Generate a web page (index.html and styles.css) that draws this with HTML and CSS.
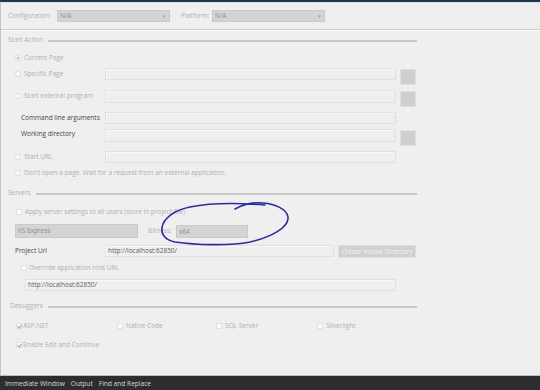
FILE: index.html
```html
<!DOCTYPE html>
<html>
<head>
<meta charset="utf-8">
<link rel="stylesheet" href="styles.css">
</head>
<body>
<div class="app">
  <div class="topstrip"></div>
  <div class="panel">
    <div class="toprow">
      <span class="lbl cfg-lbl">Configuration:</span>
      <div class="combo cfg">N/A<span class="arrow">▾</span></div>
      <span class="lbl plat-lbl">Platform:</span>
      <div class="combo cfg">N/A<span class="arrow">▾</span></div>
    </div>
    <div class="sep"></div>

    <div class="form">
      <div class="head h-start">Start Action<span class="rule"></span></div>

      <div class="row r-current">
        <span class="opt"><span class="radio on"></span>Current Page</span>
      </div>
      <div class="row r-specific">
        <span class="opt col1"><span class="radio"></span>Specific Page</span>
        <div class="field f-main"></div>
        <div class="btn"></div>
      </div>
      <div class="row r-external">
        <span class="opt col1"><span class="radio"></span>Start external program</span>
        <div class="field f-main tall"></div>
        <div class="btn"></div>
      </div>
      <div class="row r-args">
        <span class="dark col1 indent">Command line arguments</span>
        <div class="field f-main"></div>
      </div>
      <div class="row r-workdir">
        <span class="dark col1 indent">Working directory</span>
        <div class="field f-main tall off1"></div>
        <div class="btn off2"></div>
      </div>
      <div class="row r-url">
        <span class="opt col1"><span class="radio"></span>Start URL</span>
        <div class="field f-main"></div>
      </div>
      <div class="row r-dont">
        <span class="opt"><span class="radio"></span>Don't open a page. Wait for a request from an external application.</span>
      </div>

      <div class="head h-servers">Servers<span class="rule"></span></div>
      <div class="row r-apply">
        <span class="opt chk-row"><span class="check"></span>Apply server settings to all users (store in project file)</span>
      </div>
      <div class="row r-iis">
        <div class="combo iis">IIS Express</div>
        <span class="lbl bit-lbl">Bitness:</span>
        <div class="combo bit">x64</div>
      </div>
      <div class="row r-purl">
        <span class="dark purl-lbl">Project Url</span>
        <div class="field f-purl">http://localhost:62850/</div>
        <div class="btn vdir">Create Virtual Directory</div>
      </div>
      <div class="row r-override">
        <span class="opt ov-row"><span class="check"></span>Override application root URL</span>
      </div>
      <div class="row r-root">
        <div class="field f-root">http://localhost:62850/</div>
      </div>

      <div class="head h-debug">Debuggers<span class="rule"></span></div>
      <div class="row r-dbg">
        <span class="opt dcol c1"><span class="check on"></span>ASP.NET</span>
        <span class="opt dcol c2"><span class="check"></span>Native Code</span>
        <span class="opt dcol c3"><span class="check"></span>SQL Server</span>
        <span class="opt dcol c4"><span class="check"></span>Silverlight</span>
      </div>
      <div class="row r-enc">
        <span class="opt dcol c1"><span class="check on"></span>Enable Edit and Continue</span>
      </div>
    </div>
  </div>
  <div class="statusbar">
    <span class="tab t1">Immediate Window</span>
    <span class="tab">Output</span>
    <span class="tab">Find and Replace</span>
  </div>
</div>
<svg class="annot" width="540" height="390" viewBox="0 0 540 390">
  <path d="M235,209 C242,205 252,202 263,203 C275,204 287,209 288,217 C289,227 272,237 250,242 C230,246 195,245 175,242 C165,240 161,234 162,228 C163,218 175,210 190,207 C210,203 240,203 265,205" fill="none" stroke="#2c2c9e" stroke-width="1.6" stroke-linecap="round"/>
</svg>
</body>
</html>
```

FILE: styles.css
```css
* { box-sizing: border-box; }
html, body {
  margin: 0;
  padding: 0;
  width: 540px;
  height: 390px;
  overflow: hidden;
  background: #efefef;
  font-family: "Open Sans", "Noto Sans", sans-serif;
  font-size: 6.5px;
  color: #b0b0b0;
}
.app {
  position: relative;
  width: 540px;
  height: 390px;
  display: flex;
  flex-direction: column;
}
.topstrip {
  height: 3px;
  background: #22384a;
  border-bottom: 1px solid #cfe8f0;
}
.panel {
  flex: 1;
  border-left: 1px solid #c4c4c4;
}
.toprow {
  display: flex;
  align-items: center;
  height: 12px;
  margin-top: 7px;
  padding-left: 7px;
}
.lbl { line-height: 12px; white-space: nowrap; }
.cfg-lbl { width: 49px; }
.plat-lbl { width: 31px; margin-left: 11px; }
.combo {
  position: relative;
  height: 12px;
  line-height: 10px;
  background: #d4d4d4;
  border: 1px solid #cacaca;
  color: #8e8e8e;
  padding-left: 2px;
  white-space: nowrap;
}
.combo.cfg { width: 113px; }
.arrow {
  position: absolute;
  right: 3px;
  top: 0;
  font-size: 5px;
  color: #a0a0a0;
}
.sep {
  height: 2px;
  margin-top: 7px;
  border-top: 1px solid #cdcdcd;
  border-bottom: 1px solid #fbfbfb;
}
.form {
  width: 416px;
  padding-left: 7px;
}
.head {
  display: flex;
  align-items: center;
  height: 12px;
  line-height: 12px;
  white-space: nowrap;
}
.rule {
  flex: 1;
  height: 2px;
  background: #c8c8c8;
  margin-left: 5px;
  margin-top: 1px;
}
.h-start { margin-top: 3px; }
.h-servers { margin-top: 8px; }
.h-debug { margin-top: 9px; padding-left: 2px; }

.row {
  display: flex;
  align-items: flex-start;
  line-height: 12px;
  white-space: nowrap;
}
.opt {
  display: flex;
  align-items: center;
  height: 12px;
  padding-left: 7px;
}
.col1 { width: 97px; flex: none; }
.indent { padding-left: 13px; }
.dark { color: #444444; line-height: 12px; }
.radio {
  width: 6px;
  height: 6px;
  border-radius: 50%;
  background: #fdfdfd;
  border: 1px solid #dcdcdc;
  margin-right: 3px;
  position: relative;
}
.radio.on::after {
  content: "";
  position: absolute;
  left: 1px;
  top: 1px;
  width: 2px;
  height: 2px;
  border-radius: 50%;
  background: #a8a8a8;
}
.check {
  width: 6px;
  height: 6px;
  background: #fdfdfd;
  border: 1px solid #e0e0e0;
  margin-right: 3px;
  position: relative;
}
.check.on::after {
  content: "";
  position: absolute;
  left: 1px;
  top: 0px;
  width: 2px;
  height: 3px;
  border-right: 1px solid #a0a0a0;
  border-bottom: 1px solid #a0a0a0;
  transform: rotate(40deg);
}
.field {
  height: 12px;
  background: #efefef;
  border: 1px solid #e0e0e0;
  box-shadow: inset 1px 1px 0 #f8f8f8;
  color: #5e5e5e;
  line-height: 10px;
  padding-left: 2px;
}
.f-main { width: 291px; }
.field.tall { height: 13px; }
.off1 { margin-top: 1px; }
.btn {
  width: 16px;
  height: 16px;
  margin-left: 4px;
  margin-top: 1px;
  background: #cfcfcf;
  border: 1px solid #e0e0e0;
}
.btn.off2 { margin-top: 2px; }

.r-current { margin-top: 6px; height: 12px; }
.r-specific { margin-top: 4px; height: 17px; }
.r-external { margin-top: 5px; height: 17px; }
.r-args { margin-top: 5px; height: 12px; }
.r-workdir { margin-top: 4px; height: 18px; }
.r-url { margin-top: 5px; height: 12px; }
.r-dont { margin-top: 4px; height: 12px; }

.r-apply { margin-top: 7px; height: 12px; }
.chk-row { padding-left: 8px; }
.r-iis { margin-top: 6px; height: 14px; align-items: center; }
.combo.iis { width: 123px; height: 14px; line-height: 12px; margin-left: 7px; }
.bit-lbl { margin-left: 10px; width: 28px; }
.combo.bit { width: 72px; height: 13px; line-height: 11px; }
.r-purl { margin-top: 7px; height: 13px; }
.purl-lbl { width: 97px; flex: none; padding-left: 7px; }
.f-purl { width: 229px; }
.btn.vdir {
  width: 78px;
  height: 13px;
  margin-top: 0;
  line-height: 11px;
  text-align: center;
  color: #f4f4f4;
  background: #d0d0d0;
}
.r-override { margin-top: 4px; height: 12px; }
.ov-row { padding-left: 13px; }
.ov-row .check { margin-right: 2px; }
.r-root { margin-top: 5px; height: 12px; }
.f-root { width: 371px; margin-left: 17px; }

.r-dbg { margin-top: 8px; height: 12px; }
.r-enc { margin-top: 7px; height: 12px; }
.dcol { padding-left: 0; }
.c1 { margin-left: 8px; width: 101px; }
.c2 { width: 99px; }
.c3 { width: 101px; }
.c1 .check { margin-right: 1px; }
.c2 .check, .c3 .check, .c4 .check { margin-right: 3px; }

.statusbar {
  height: 15px;
  background: #2d2d30;
  border-top: 1px solid #bdbdbd;
  display: flex;
  align-items: center;
  padding-left: 5px;
  gap: 6px;
  color: #d6d6d6;
  font-size: 6.6px;
}
.annot {
  position: absolute;
  left: 0;
  top: 0;
  pointer-events: none;
}
```
